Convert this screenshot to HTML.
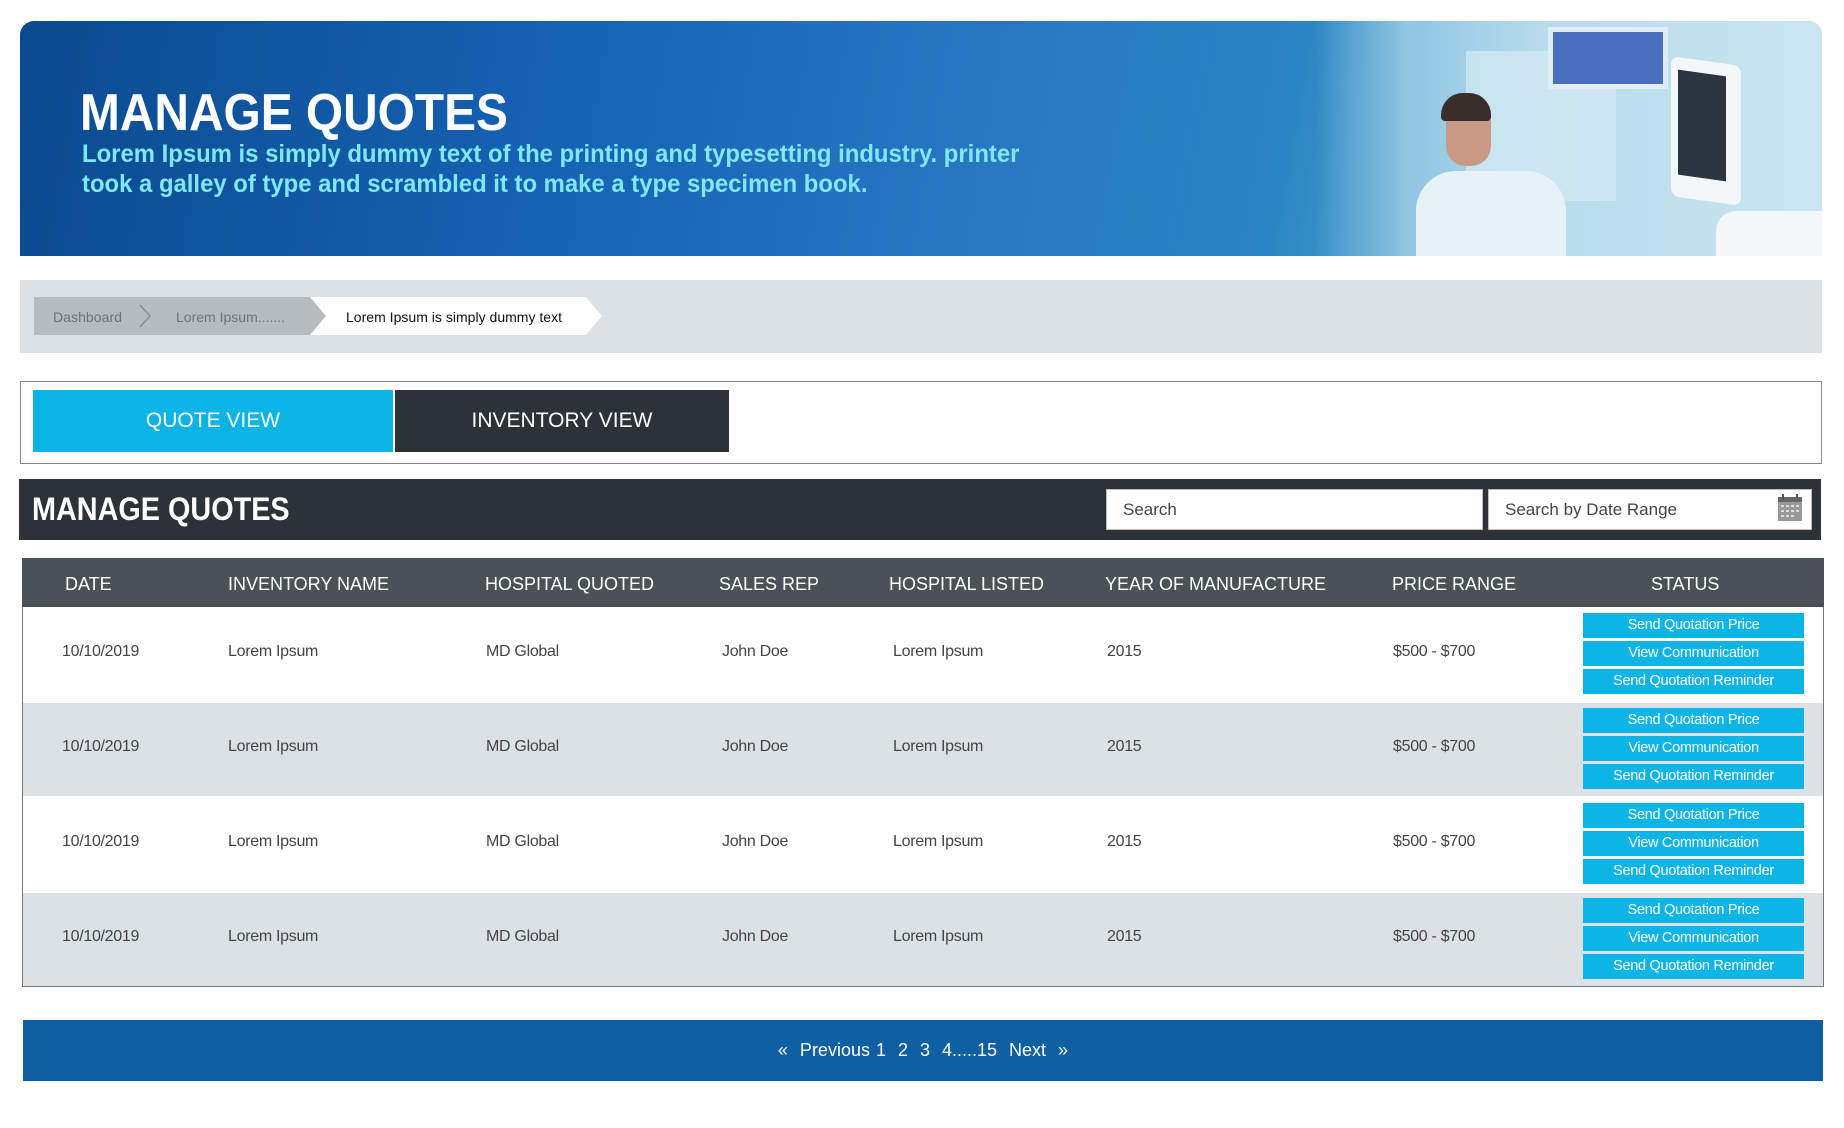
<!DOCTYPE html>
<html><head><meta charset="utf-8"><style>
*{margin:0;padding:0;box-sizing:border-box}
body{width:1844px;height:1128px;background:#fff;font-family:"Liberation Sans",Arial,sans-serif;position:relative;overflow:hidden}
.a{position:absolute}
.n{display:inline-block;transform-origin:0 50%;white-space:nowrap}
.banner{left:20px;top:21px;width:1802px;height:235px;border-radius:14px 14px 0 0;overflow:hidden;background:linear-gradient(100deg,#0b4a8e 0%,#1662b3 30%,#2a78c4 55%,#2a86c2 70%,#3b93c8 74%)}
.photo{left:1296px;top:0;width:506px;height:235px;background:linear-gradient(90deg,rgba(60,150,205,0) 0%,#8fc6e3 18%,#b8dcec 45%,#c9e5f0 100%)}
.th{font-size:18px;color:#fff;top:574px}
.td{font-size:16px;color:#444;letter-spacing:-0.3px}
.btn{position:absolute;left:1583px;width:221px;height:25px;background:#0db4e6;color:#fff;font-size:14.5px;text-align:center;line-height:25px;letter-spacing:-0.3px}
</style></head><body>
<div class="a banner">
 <div class="a photo">
  <div class="a" style="left:150px;top:30px;width:150px;height:150px;background:#d6ebf4;opacity:.7"></div>
  <div class="a" style="left:232px;top:6px;width:120px;height:62px;background:#4a6fc0;border:5px solid #dfeef6"></div>
  <div class="a" style="left:100px;top:150px;width:150px;height:90px;background:#e6f2f8;border-radius:40px 40px 0 0"></div>
  <div class="a" style="left:130px;top:75px;width:45px;height:70px;background:#c89a85;border-radius:20px"></div>
  <div class="a" style="left:125px;top:72px;width:50px;height:28px;background:#3a2e2a;border-radius:22px 22px 4px 4px"></div>
  <div class="a" style="left:355px;top:40px;width:70px;height:140px;background:#f3f7f9;border-radius:8px;transform:skewY(8deg)"></div>
  <div class="a" style="left:362px;top:52px;width:48px;height:105px;background:#2a3540;transform:skewY(8deg)"></div>
  <div class="a" style="left:400px;top:190px;width:110px;height:45px;background:#f3f7f9;border-radius:20px 0 0 0"></div>
 </div>
 <div class="a" style="left:60px;top:62px;color:#fff;font-weight:bold;font-size:52px;line-height:60px"><span class="n" style="transform:scaleX(.92)">MANAGE QUOTES</span></div>
 <div class="a" style="left:62px;top:118px;color:#7fe8f4;font-weight:bold;font-size:25px;line-height:30px"><span class="n" style="transform:scaleX(.955)">Lorem Ipsum is simply dummy text of the printing and typesetting industry. printer</span><br><span class="n" style="transform:scaleX(.955)">took a galley of type and scrambled it to make a type specimen book.</span></div>
</div>

<div class="a" style="left:20px;top:280px;width:1802px;height:73px;background:#dce1e5"></div>
<svg class="a" style="left:34px;top:297px" width="570" height="39">
 <polygon points="0,0 276,0 292,19 276,38 0,38" fill="#b5bbbf"/>
 <polygon points="276,0 552,0 568,19 552,38 276,38 292,19" fill="#fff"/>
 <polyline points="106,8 116,19 106,30" fill="none" stroke="#8a9095" stroke-width="1.5"/>
 <text x="19" y="25" font-family="Liberation Sans" font-size="14" fill="#6c7278" textLength="69">Dashboard</text>
 <text x="142" y="25" font-family="Liberation Sans" font-size="14" fill="#6c7278" textLength="109">Lorem Ipsum.......</text>
 <text x="312" y="25" font-family="Liberation Sans" font-size="14" fill="#111" textLength="216">Lorem Ipsum is simply dummy text</text>
</svg>

<div class="a" style="left:20px;top:381px;width:1802px;height:83px;border:1px solid #888"></div>
<div class="a" style="left:33px;top:390px;width:360px;height:62px;background:#0cb4e6;color:#fff;font-size:21px;text-align:center;line-height:62px">QUOTE VIEW</div>
<div class="a" style="left:395px;top:390px;width:334px;height:62px;background:#2d3238;color:#fff;font-size:21px;text-align:center;line-height:62px">INVENTORY VIEW</div>

<div class="a" style="left:19px;top:479px;width:1802px;height:61px;background:#2d3238"></div>
<div class="a" style="left:32px;top:489px;color:#fff;font-weight:bold;font-size:32px;line-height:40px"><span class="n" style="transform:scaleX(.9)">MANAGE QUOTES</span></div>
<div class="a" style="left:1106px;top:489px;width:377px;height:41px;background:#fff;border:1px solid #bbb;font-size:17px;color:#444;padding-left:16px;line-height:39px">Search</div>
<div class="a" style="left:1488px;top:489px;width:324px;height:41px;background:#fff;border:1px solid #bbb;font-size:17px;color:#444;padding-left:16px;line-height:39px">Search by Date Range</div>
<svg class="a" style="left:1777px;top:494px" width="26" height="28"><rect x="1" y="3" width="24" height="24" fill="#999"/><rect x="1" y="3" width="24" height="5" fill="#666"/><rect x="5" y="0" width="2" height="5" fill="#555"/><rect x="19" y="0" width="2" height="5" fill="#555"/><g fill="#ddd"><rect x="4" y="11" width="3" height="2"/><rect x="9" y="11" width="3" height="2"/><rect x="14" y="11" width="3" height="2"/><rect x="19" y="11" width="3" height="2"/><rect x="4" y="16" width="3" height="2"/><rect x="9" y="16" width="3" height="2"/><rect x="14" y="16" width="3" height="2"/><rect x="19" y="16" width="3" height="2"/><rect x="4" y="21" width="3" height="2"/><rect x="9" y="21" width="3" height="2"/><rect x="14" y="21" width="3" height="2"/></g></svg>

<div class="a" style="left:22px;top:558px;width:1802px;height:429px;border:1px solid #777;border-top:none"></div>
<div class="a" style="left:22px;top:558px;width:1802px;height:49px;background:#4a5157"></div>
<div class="a th" style="left:65px">DATE</div>
<div class="a th" style="left:228px">INVENTORY NAME</div>
<div class="a th" style="left:485px">HOSPITAL QUOTED</div>
<div class="a th" style="left:719px">SALES REP</div>
<div class="a th" style="left:889px">HOSPITAL LISTED</div>
<div class="a th" style="left:1105px">YEAR OF MANUFACTURE</div>
<div class="a th" style="left:1392px">PRICE RANGE</div>
<div class="a th" style="left:1651px">STATUS</div>

<div class="a" style="left:23px;top:703px;width:1800px;height:93px;background:#dce1e5"></div>
<div class="a" style="left:23px;top:893px;width:1800px;height:93px;background:#dce1e5"></div>

<div class="a" style="left:0;top:643px;width:1844px">
 <div class="a td" style="left:62px">10/10/2019</div><div class="a td" style="left:228px">Lorem Ipsum</div><div class="a td" style="left:486px">MD Global</div><div class="a td" style="left:722px">John Doe</div><div class="a td" style="left:893px">Lorem Ipsum</div><div class="a td" style="left:1107px">2015</div><div class="a td" style="left:1393px">$500 - $700</div>
</div>
<div class="a" style="left:0;top:738px;width:1844px">
 <div class="a td" style="left:62px">10/10/2019</div><div class="a td" style="left:228px">Lorem Ipsum</div><div class="a td" style="left:486px">MD Global</div><div class="a td" style="left:722px">John Doe</div><div class="a td" style="left:893px">Lorem Ipsum</div><div class="a td" style="left:1107px">2015</div><div class="a td" style="left:1393px">$500 - $700</div>
</div>
<div class="a" style="left:0;top:833px;width:1844px">
 <div class="a td" style="left:62px">10/10/2019</div><div class="a td" style="left:228px">Lorem Ipsum</div><div class="a td" style="left:486px">MD Global</div><div class="a td" style="left:722px">John Doe</div><div class="a td" style="left:893px">Lorem Ipsum</div><div class="a td" style="left:1107px">2015</div><div class="a td" style="left:1393px">$500 - $700</div>
</div>
<div class="a" style="left:0;top:928px;width:1844px">
 <div class="a td" style="left:62px">10/10/2019</div><div class="a td" style="left:228px">Lorem Ipsum</div><div class="a td" style="left:486px">MD Global</div><div class="a td" style="left:722px">John Doe</div><div class="a td" style="left:893px">Lorem Ipsum</div><div class="a td" style="left:1107px">2015</div><div class="a td" style="left:1393px">$500 - $700</div>
</div>

<div class="btn" style="top:613px">Send Quotation Price</div>
<div class="btn" style="top:641px">View Communication</div>
<div class="btn" style="top:669px">Send Quotation Reminder</div>
<div class="btn" style="top:708px">Send Quotation Price</div>
<div class="btn" style="top:736px">View Communication</div>
<div class="btn" style="top:764px">Send Quotation Reminder</div>
<div class="btn" style="top:803px">Send Quotation Price</div>
<div class="btn" style="top:831px">View Communication</div>
<div class="btn" style="top:859px">Send Quotation Reminder</div>
<div class="btn" style="top:898px">Send Quotation Price</div>
<div class="btn" style="top:926px">View Communication</div>
<div class="btn" style="top:954px">Send Quotation Reminder</div>

<div class="a" style="left:23px;top:1020px;width:1800px;height:61px;background:#0f5fa3;color:#fff;font-size:18px;text-align:center;line-height:61px;word-spacing:1px">«&nbsp; Previous 1 &nbsp;2 &nbsp;3 &nbsp;4.....15 &nbsp;Next &nbsp;»</div>
</body></html>
